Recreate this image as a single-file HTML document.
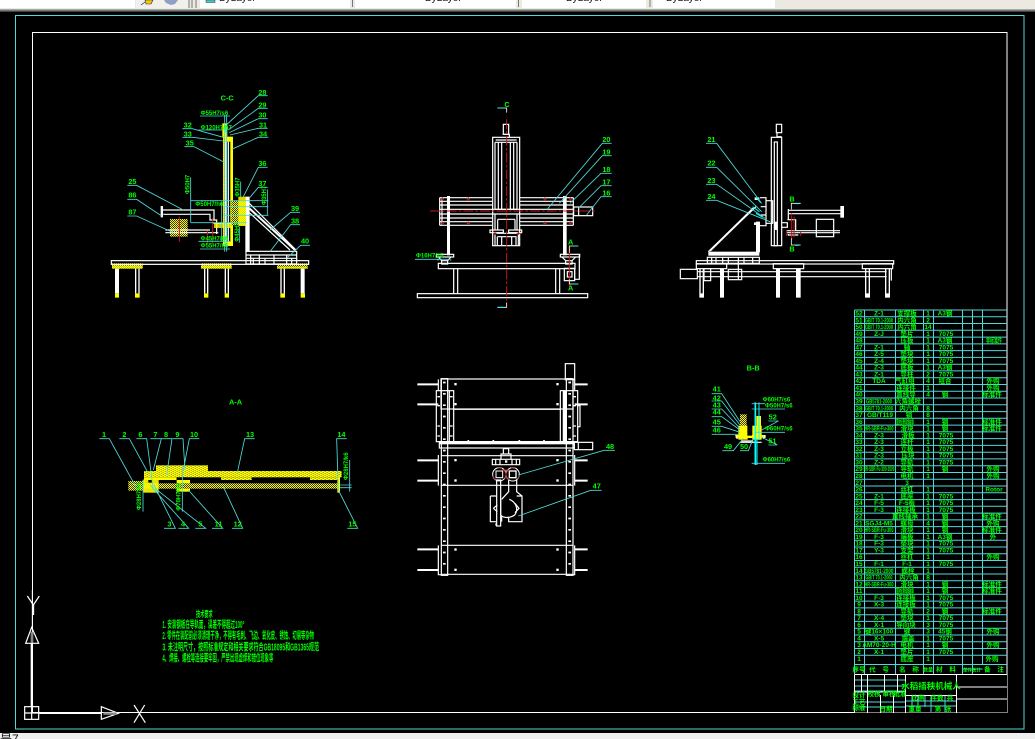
<!DOCTYPE html>
<html lang="zh"><head><meta charset="utf-8"><title>CAD</title>
<style>
html,body{margin:0;padding:0;background:#000;width:1035px;height:739px;overflow:hidden}
svg{display:block}
text{font-family:"Liberation Sans","Noto Sans CJK SC",sans-serif;fill:#0f0}
.w{fill:none;stroke:#fff;stroke-width:3.600}
.wt{fill:none;stroke:#fff;stroke-width:6}
.c{fill:none;stroke:#4fd8d8;stroke-width:2.600}
.cb{fill:none;stroke:#0ff;stroke-width:3}
.r{fill:none;stroke:#c01818;stroke-width:3}
.rd{fill:none;stroke:#c01818;stroke-width:3;stroke-dasharray:30 6 8 6}
.y{fill:#ff0}
.h{fill:url(#chk)}
.h2{fill:url(#chk2)}
.l text{font-size:22px;font-weight:bold}
.d text{font-size:18px;font-weight:bold}
.t text{font-size:6.500px;text-anchor:middle;font-weight:bold}
</style></head><body>
<svg width="1035" height="739" viewBox="0 0 1035 739" xmlns="http://www.w3.org/2000/svg">
<defs>
<pattern id="chk" width="6" height="6" patternUnits="userSpaceOnUse"><rect width="6" height="6" fill="#ff0"/><rect width="3" height="3" fill="#332"/><rect x="3" y="3" width="3" height="3" fill="#332"/></pattern>
<pattern id="chk2" width="12" height="6" patternUnits="userSpaceOnUse"><rect width="12" height="6" fill="#ff0"/><rect x="2" y="1" width="3" height="2" fill="#443"/><rect x="8" y="3" width="3" height="2" fill="#443"/></pattern>
</defs>
<rect width="1035" height="739" fill="#000"/>
<!-- top bar -->
<rect width="1035" height="9" fill="#ece9e0"/>
<rect x="0" y="0" width="135" height="8" fill="#fff"/>
<rect x="136" y="0" width="52" height="8" fill="#f2f0ea"/>
<path d="M141 5l4-3M145 0h8l-2 4h-5z" fill="#ec0" stroke="#225" stroke-width=".6"/>
<path d="M164 0h14l-3 4-4 1-5-2z" fill="#8fa0c8"/>
<rect x="200" y="0" width="150" height="8" fill="#fff"/>
<rect x="355" y="0" width="161" height="8" fill="#fff"/>
<rect x="522" y="0" width="124" height="8" fill="#fff"/>
<rect x="653" y="0" width="122" height="8" fill="#fff"/>
<path d="M189 0v8M192 0v8M196 0v8M352.500 0v7M518.500 0v7M650 0v7" stroke="#777" stroke-width="1"/>
<rect x="206" y="0" width="9" height="2.500" fill="#4cc" stroke="#333" stroke-width=".5"/>
<g style="font-size:10px"><text x="219" y="1" style="fill:#111;font-size:10px">ByLayer</text><text x="425" y="1" style="fill:#111;font-size:10px">ByLayer</text><text x="566" y="1" style="fill:#111;font-size:10px">ByLayer</text><text x="666" y="1" style="fill:#111;font-size:10px">ByLayer</text></g>
<rect y="9" width="1035" height="1.500" fill="#a8a8a8"/><rect y="10.500" width="1035" height="1.500" fill="#444"/>
<!-- frames -->
<rect x="15.500" y="15.500" width="1008.500" height="713.500" fill="none" stroke="#4fd8d8" stroke-width="1"/>
<rect x="32.500" y="32.500" width="974.500" height="680" fill="none" stroke="#fff" stroke-width="1"/>
<!-- bottom bar -->
<rect y="733" width="1035" height="6" fill="#efefef"/>
<text x="0" y="743" style="fill:#111;font-size:12px">是7</text>

<!-- VIEW 1 -->
<g transform="translate(90,80) scale(.33333)">
<rect x="66" y="550" width="92" height="16" class="h"/><rect x="333" y="550" width="92" height="16" class="h"/><rect x="561" y="550" width="92" height="16" class="h"/>
<path class="y" d="M66 556h92v10H66zM333 556h92v10h-92zM561 560h92v6h-92z" opacity=".75"/>
<rect x="64" y="542" width="592" height="11" class="w"/>
<path fill="#fff" d="M75 566h12v74H75zM135 566h4v74h-4zM145 566h4v74h-4zM342 566h4v74h-4zM351 566h4v74h-4zM404 566h4v74h-4zM413 566h4v74h-4zM571 566h4v74h-4zM581 566h4v74h-4zM632 566h12v74h-12z"/>
<path class="y" d="M75 640h12v13H75zM135 640h14v13h-14zM342 640h13v13h-13zM404 640h13v13h-13zM571 640h14v13h-14zM632 640h13v13h-13z"/>
<rect x="468" y="514" width="152" height="38" class="w"/><path class="w" d="M468 525h152M468 535h152M482 525v27M490 535v17M508 525v27M525 535v17M552 525v27M590 525v27M605 535v17"/>
<path fill="#fff" d="M466 350h13v165h-13z"/>
<path class="wt" d="M478 385 615 510"/><path class="w" d="M478 370 618 510M478 398 600 510"/>
<rect x="399" y="170" width="30" height="328" class="y"/>
<path fill="#000" d="M407 185h14v300h-14z"/><path class="w" d="M408 185v300M415 185v300"/>
<path d="M403 175v310" stroke="#d02010" stroke-width="3" stroke-dasharray="4 3"/>
<rect x="397" y="130" width="15" height="40" class="y"/>
<rect x="424" y="362" width="44" height="74" class="h"/><rect x="445" y="350" width="23" height="88" class="y" opacity=".85"/>
<path class="w" d="M214 390H372V420M220 403H360V420"/>
<rect x="212" y="378" width="7" height="34" fill="#fff"/>
<rect x="240" y="417" width="53" height="53" class="h"/>
<path class="w" d="M226 450H360M226 458H385M358 420H380V462M370 430H425"/>
<rect x="372" y="428" width="50" height="16" class="y" opacity=".8"/>
<path class="r" d="M268 410V485M352 452V490M368 415V490"/>
<path class="c" d="M404 105V515M410 105V515M302 292V428M302 362H535M302 428H470M400 380H535M400 406H535M532 328V406M330 108H420M325 150H400M325 484H420M330 507H420M452 305V350M448 440V488M395 365V485"/>
<path class="c" d="M533 47H505L412 132M533 85H505L415 150M533 116H505L418 158M533 145H505L420 165M535 172H505L425 208M277 146H307L400 172M277 172H307L400 183M283 200H312L405 248M533 262H505L460 350M533 322H505L480 352M630 397H602L540 450M630 434H602L540 515M660 496H632L590 535M112 316H140L280 390M112 358H140L215 408M112 408H140L250 458"/>
<path class="cb" d="M404 145l6 15" stroke-width="6"/>
<g class="l"><text x="505" y="45">28</text><text x="505" y="83">29</text><text x="505" y="113">30</text><text x="507" y="142">31</text><text x="507" y="169">34</text><text x="281" y="143">32</text><text x="281" y="169">33</text><text x="287" y="197">35</text><text x="505" y="258">36</text><text x="505" y="318">37</text><text x="603" y="393">39</text><text x="603" y="431">38</text><text x="633" y="491">40</text><text x="115" y="312">25</text><text x="115" y="353">86</text><text x="115" y="404">87</text><text x="392" y="62">C-C</text></g>
<g class="d"><text x="332" y="105">Φ55H7/s6</text><text x="332" y="148">Φ120H7/h7</text><text x="316" y="378">Φ50H7/h6</text><text x="332" y="481">Φ45H7/k6</text><text x="332" y="503">Φ55H7/k6</text>
<text transform="translate(298,342) rotate(-90)">Φ50H7</text><text transform="translate(448,350) rotate(-90)">Φ35H7</text><text transform="translate(528,375) rotate(-90)">Φ35H7</text><text transform="translate(447,485) rotate(-90)">Φ45H7</text></g>
</g>

<!-- VIEW 2 -->
<g transform="translate(400,90) scale(.33333)">
<path class="w" d="M119 323H277M119 334H277M119 345H277M119 358H520M119 372H520M119 384H277M119 395H277M119 406H277M359 323H520M359 334H520M359 345H520M359 384H520M359 395H520M359 406H520M119 323V406M126 323V406M492 323V406M520 323V406"/>
<rect x="278" y="142" width="81" height="325" class="w"/>
<path class="w" d="M285 157H351M285 157V358M351 157V358M295 157V358M305 157V358M331 157V358M341 157V358M287 150H350M285 372V420M351 372V420M293 388H345M293 388V420M345 388V420M285 358H351"/>
<rect x="310" y="103" width="16" height="30" class="w"/><path class="w" d="M308 133H328V142"/>
<rect x="270" y="420" width="40" height="8" class="w"/><rect x="326" y="420" width="39" height="8" class="w"/>
<path class="w" d="M285 430H355M285 430V465M355 430V465M292 440H348V465M292 440V465M305 440V465M335 440V465"/>
<rect x="141" y="318" width="9" height="178" fill="#fff"/><rect x="489" y="318" width="11" height="178" fill="#fff"/>
<rect x="109" y="493" width="52" height="8" class="w"/><rect x="481" y="493" width="58" height="8" class="w"/>
<path class="w" d="M115 501 125 512H143L153 501M125 512V522H143V512M486 501 497 512H516L527 501M497 512V522H516V512"/>
<rect x="115" y="520" width="410" height="16" class="w"/>
<path class="w" d="M161 536V610M173 536V610M467 536V610M479 536V610"/>
<rect x="52" y="611" width="511" height="12" class="w"/>
<rect x="493" y="535" width="31" height="37" class="w"/><rect x="502" y="545" width="14" height="16" class="w"/><path class="w" d="M524 535V568H538V493"/>
<rect x="521" y="351" width="57" height="26" class="w"/><path class="w" d="M536 351V377"/>
<path class="rd" d="M320 88V640M90 363H590"/>
<path class="r" d="M122 327h10M127 322v10M200 327h10M205 322v10M430 327h10M435 322v10M506 327h10M511 322v10M122 400h10M127 395v10M200 400h10M205 395v10M430 400h10M435 395v10M506 400h10M511 395v10M350 430h10M355 425v10M280 430h10M285 425v10"/>
<path class="r" d="M508 470V590"/>
<path class="c" d="M635 160H607L440 360M635 197H607L478 340M635 250H603L510 340M635 287H603L535 355M635 320H603L560 375M45 508H150"/>
<path fill="none" stroke="#fff" stroke-width="2.400" d="M292 54H320V68M292 652H320V638M508 488V468H535M508 568V582H535"/>
<path class="cb" d="M296 54h14M296 652h14M520 468h12M520 582h12M112 510h4M150 510h4" stroke-width="5"/>
<g class="l"><text x="607" y="156">20</text><text x="607" y="193">19</text><text x="607" y="246">18</text><text x="607" y="283">17</text><text x="607" y="316">16</text><text x="313" y="51">C</text><text x="504" y="464">A</text><text x="504" y="602">A</text></g>
<g class="d"><text x="48" y="503">Φ16H7/s6</text></g>
</g>

<!-- VIEW 3 -->
<g transform="translate(670,110) scale(.33333)">
<rect x="304" y="82" width="31" height="325" class="w"/><rect x="313" y="96" width="9" height="311" class="w"/>
<rect x="319" y="43" width="16" height="25" class="w"/><path class="w" d="M321 68V80H335"/>
<path class="w" d="M270 263H288V347H270M288 272H308V340H288M272 290H288M272 315H288"/>
<rect x="313" y="335" width="9" height="25" fill="#fff"/>
<path fill="#fff" d="M258 335h12v92h-12zM254 262h14v8h-14zM252 337h18v8h-18z"/>
<path class="wt" d="M120 422 250 295"/><path class="w" d="M115 425 258 290"/>
<rect x="115" y="425" width="153" height="12" fill="#fff"/>
<rect x="112" y="442" width="156" height="18" class="w"/><path class="w" d="M125 442V460M138 442V460M158 442V460M175 442V460M205 442V460M222 442V460M248 442V460"/>
<rect x="79" y="452" width="592" height="10" class="w"/>
<rect x="79" y="461" width="91" height="15" class="w"/><rect x="310" y="461" width="91" height="15" class="w"/><rect x="577" y="461" width="91" height="15" class="w"/>
<path class="w" d="M81 485H650M81 500H650M664 476V512"/>
<rect x="31" y="478" width="51" height="28" class="w"/><rect x="102" y="476" width="20" height="36" class="w"/><rect x="175" y="478" width="40" height="31" class="w"/><path class="w" d="M205 462V509"/>
<path fill="#fff" d="M88 476h4v87H88zM98 476h4v87H98zM88 550h14v13H88zM150 476h12v87h-12zM318 476h12v87h-12zM378 476h14v87h-14zM585 476h4v87h-4zM596 476h4v87h-4zM585 550h15v13h-15zM645 476h4v87h-4zM656 476h4v87h-4zM645 550h15v13h-15z"/>
<path class="w" d="M357 301H512M357 311H512M355 297V330"/>
<rect x="511" y="288" width="11" height="35" fill="#fff"/>
<rect x="439" y="328" width="52" height="52" class="w"/>
<path class="w" d="M350 362H510M350 368H510M352 329H377V362M335 338H352V352H335M355 372V375H385"/>
<path class="r" d="M365 310V390M372 320V382M350 362V378M392 366V378"/>
<path fill="none" stroke="#fff" stroke-width="2.400" d="M364 298V280H392M364 385V405H392"/>
<path class="cb" d="M376 281h10M376 406h10" stroke-width="5"/>
<path class="c" d="M108 100H140L275 280M108 172H140L275 305M108 223H140L285 325M108 271H140L300 335"/>
<path class="cb" d="M258 262l14 16M248 290l20 15M258 310l20 12" stroke-width="4"/>
<g class="l"><text x="112" y="96">21</text><text x="112" y="167">22</text><text x="112" y="219">23</text><text x="112" y="267">24</text><text x="358" y="275">B</text><text x="358" y="425">B</text></g>
</g>

<!-- VIEW 4 -->
<g transform="translate(90,390) scale(.33333)">
<rect x="198" y="226" width="156" height="17" class="h2"/>
<rect x="162" y="243" width="593" height="19" class="h2"/>
<rect x="162" y="262" width="98" height="8" class="y"/><rect x="393" y="262" width="92" height="8" class="h2"/><rect x="660" y="262" width="85" height="8" class="h2"/>
<rect x="115" y="273" width="50" height="29" class="h"/>
<rect x="160" y="280" width="590" height="16" class="h"/>
<rect x="160" y="268" width="46" height="40" class="y" opacity=".9"/>
<rect x="260" y="270" width="40" height="10" class="y"/><rect x="260" y="296" width="40" height="9" class="y"/>
<path fill="#000" d="M175 270h12v8h-12zM260 262h33v8h-33z"/>
<rect x="742" y="260" width="8" height="48" class="y"/>
<path class="c" d="M28 146H58L140 295M88 146H118L175 250M139 146H170L190 300M181 146H214L190 240M214 146H246L230 255M248 146H279L285 240M328 146H298L280 240M494 146H464L442 248M770 146H740L745 300M222 415H256L192 285M265 415H296L180 285M316 415H347L195 295M366 415H398L295 300M426 415H458L400 290M772 415H803L745 300"/>
<path class="c" d="M159 270V365M277 232V365M750 285H785M750 293H785M779 210V305"/>
<g class="l"><text x="36" y="141">1</text><text x="97" y="141">2</text><text x="145" y="141">6</text><text x="190" y="141">7</text><text x="222" y="141">8</text><text x="256" y="141">9</text><text x="300" y="141">10</text><text x="468" y="141">13</text><text x="742" y="141">14</text><text x="232" y="410">3</text><text x="273" y="410">4</text><text x="325" y="410">5</text><text x="374" y="410">11</text><text x="431" y="410">12</text><text x="775" y="410">15</text><text x="417" y="43">A-A</text></g>
<g class="d"><text transform="translate(153,360) rotate(-90)">Φ28H7/k6</text><text transform="translate(271,362) rotate(-90)">Φ70H7/k6</text><text transform="translate(774,270) rotate(-90)">Φ28H7/k6</text></g>
</g>

<!-- VIEW 5 -->
<g transform="translate(400,360) scale(.33333)">
<path class="wt" d="M52 73H115M524 73H563M52 133H115M524 133H563M52 301H115M524 301H563M52 362H115M524 362H563M52 568H115M524 568H563M52 630H115M524 630H563"/>
<rect x="123" y="57" width="396" height="90" class="w"/><path class="w" d="M160 148H480"/>
<rect x="496" y="11" width="28" height="48" class="w"/>
<rect x="124" y="56" width="19" height="590" class="w"/><rect x="499" y="56" width="20" height="590" class="w"/>
<path class="w" d="M115 58V90M115 285V377M115 556V644H125M524 58V90M524 285V377M524 556V644H515"/>
<rect x="109" y="92" width="52" height="153" class="w"/><rect x="481" y="92" width="52" height="153" class="w"/>
<path class="w" d="M148 92V245M490 92V245M533 137H540V200H533"/>
<path fill="#fff" d="M489 92h12v153h-12z"/>
<rect x="118" y="245" width="405" height="19" class="w"/><rect x="118" y="243" width="405" height="10" fill="#fff"/>
<rect x="523" y="247" width="55" height="22" class="w"/><path class="w" d="M535 247V269"/>
<path class="w" d="M124 287H519M124 376H519M124 556H519M124 643H519"/>
<g fill="#fff"><rect x="163" y="69" width="7" height="7"/><rect x="469" y="69" width="7" height="7"/><rect x="163" y="129" width="7" height="7"/><rect x="469" y="129" width="7" height="7"/><rect x="163" y="297" width="7" height="7"/><rect x="469" y="297" width="7" height="7"/><rect x="163" y="358" width="7" height="7"/><rect x="469" y="358" width="7" height="7"/><rect x="163" y="565" width="7" height="7"/><rect x="469" y="565" width="7" height="7"/><rect x="163" y="626" width="7" height="7"/><rect x="469" y="626" width="7" height="7"/></g>
<path d="M133 65V640M509 65V640" stroke="#fff" stroke-width="8" stroke-dasharray="5 29" fill="none"/>
<path d="M112 110h8M112 137h8M112 198h8M112 228h8M150 110h8M150 198h8M150 228h8M520 110h8M520 137h8M520 198h8M520 228h8" stroke="#fff" stroke-width="4"/>
<path d="M205 240v4M280 240v4M358 240v4M432 240v4" stroke="#fff" stroke-width="5"/>
<path class="w" d="M310 266H326V282H310zM303 282H333V298H303zM277 298H359V314H277zM287 298V314M300 298V314M336 298V314M349 298V314"/>
<rect x="315" y="301" width="7" height="7" fill="#fff"/>
<circle cx="298" cy="343" r="20" fill="none" stroke="#fff" stroke-width="3"/><circle cx="338" cy="343" r="20" fill="none" stroke="#fff" stroke-width="3"/>
<circle cx="298" cy="343" r="20" fill="none" stroke="#c01818" stroke-width="2" stroke-dasharray="14 30"/><circle cx="338" cy="343" r="20" fill="none" stroke="#c01818" stroke-width="2" stroke-dasharray="14 30"/>
<rect x="328" y="333" width="20" height="20" fill="none" stroke="#fff" stroke-width="4"/><rect x="288" y="333" width="20" height="20" fill="none" stroke="#fff" stroke-width="3"/>
<path class="r" d="M306 330H330M318 330V350"/>
<rect x="290" y="360" width="12" height="138" class="w"/>
<path class="w" d="M271 408H290M271 408V485H290M326 360V395L305 418M350 360V395L366 408V485H326V470M366 408H350M305 470V485M328 418C345 425 358 445 344 465 330 475 310 475 302 465M302 418V465M280 445 292 435M280 445 292 455M345 430 357 445 345 458"/>
<rect x="286" y="490" width="5" height="7" fill="#fff"/>
<path class="c" d="M645 271H612L355 345M605 391H572L355 468"/>
<g class="l"><text x="618" y="267">48</text><text x="578" y="386">47</text></g>
</g>

<!-- SECTION B-B -->
<g transform="translate(690,355) scale(.33333)">
<rect x="150" y="178" width="20" height="38" class="h"/>
<rect x="145" y="212" width="28" height="42" class="y"/>
<rect x="187" y="212" width="28" height="42" class="y"/>
<rect x="199" y="183" width="14" height="30" class="y"/>
<rect x="137" y="240" width="90" height="9" class="y"/>
<path fill="#000" d="M172 212h14v30h-14z"/>
<path class="w" d="M154 258H190M150 262H215M225 240 220 252M137 240 142 252"/>
<path d="M196 142V330" stroke="#0ff" stroke-width="5"/><path d="M207 142V255M201 250V330" stroke="#0ff" stroke-width="3"/>
<path class="c" d="M65 116H95L150 200M65 138H95L150 210M65 162H95L150 220M65 185H95L150 225M65 214H95L150 232M65 238H145M97 287H130L160 250M150 287H175L190 250M185 146H225M185 162H285M185 325H285M195 232H285M235 198H265L215 225M235 270H262L212 245"/>
<g class="l"><text x="170" y="47">B-B</text><text x="68" y="110">41</text><text x="68" y="137">42</text><text x="68" y="158">43</text><text x="68" y="178">44</text><text x="68" y="208">45</text><text x="68" y="232">46</text><text x="102" y="282">49</text><text x="150" y="282">50</text><text x="236" y="193">52</text><text x="235" y="266">51</text></g>
<g class="d"><text x="218" y="140">Φ60H7/s6</text><text x="225" y="158">Φ50H7/s6</text><text x="225" y="227">Φ60H7/s6</text><text x="218" y="320">Φ60H7/s6</text></g>
</g>

<!-- NOTES -->
<g transform="translate(0,590) scale(.33333)" style="font-weight:bold">
<text x="588" y="81" style="font-size:26px" textLength="50" lengthAdjust="spacingAndGlyphs">技术要求</text>
<text x="487" y="114" style="font-size:31px" textLength="246" lengthAdjust="spacingAndGlyphs">1. 安装钢板在导轨面，误差不得超过100°</text>
<text x="487" y="147" style="font-size:31px" textLength="455" lengthAdjust="spacingAndGlyphs">2. 零件在装配前必须清理干净，不得有毛刺、飞边、氧化皮、锈蚀、切屑等杂物</text>
<text x="487" y="181" style="font-size:31px" textLength="470" lengthAdjust="spacingAndGlyphs">3. 未注明尺寸，按照标准规定和相关要求符合GB18095和GB1365规范</text>
<text x="487" y="214" style="font-size:31px" textLength="333" lengthAdjust="spacingAndGlyphs">4、焊接、螺栓等连接要牢固，严禁出现虚焊和错位现象等</text>
</g>

<!-- UCS -->
<g transform="translate(0,590) scale(.33333)">
<path d="M97 0V108" stroke="#fff" stroke-width="3" fill="none"/>
<path class="w" d="M82 18 100 45 118 18M100 45V75"/><path d="M100 45V75" stroke="#fff" stroke-width="5"/>
<path class="w" d="M95 112 77 160H116Z"/><path d="M96 125V158" stroke="#888" stroke-width="8"/>
<path d="M95 160V350" stroke="#fff" stroke-width="6"/>
<rect x="74" y="350" width="42" height="38" class="w"/><path class="w" d="M95 350V388M74 369H116"/>
<path d="M116 369H305" stroke="#fff" stroke-width="6"/>
<path class="w" d="M304 350 355 370 304 388Z"/><path d="M310 371H350" stroke="#888" stroke-width="7"/>
<path class="w" d="M402 345 436 398M434 345 402 398"/>
</g>

<!-- TABLE lines -->
<path fill="none" stroke="#4fd8d8" stroke-width="1" d="M854.500 310H1007M854.500 316.800H1007M854.500 323.500H1007M854.500 330.300H1007M854.500 337.100H1007M854.500 343.900H1007M854.500 350.600H1007M854.500 357.400H1007M854.500 364.200H1007M854.500 370.900H1007M854.500 377.700H1007M854.500 384.500H1007M854.500 391.200H1007M854.500 398H1007M854.500 404.800H1007M854.500 411.600H1007M854.500 418.300H1007M854.500 425.100H1007M854.500 431.900H1007M854.500 438.600H1007M854.500 445.400H1007M854.500 452.200H1007M854.500 458.900H1007M854.500 465.700H1007M854.500 472.500H1007M854.500 479.300H1007M854.500 486H1007M854.500 492.800H1007M854.500 499.600H1007M854.500 506.300H1007M854.500 513.100H1007M854.500 519.900H1007M854.500 526.600H1007M854.500 533.400H1007M854.500 540.200H1007M854.500 547H1007M854.500 553.700H1007M854.500 560.500H1007M854.500 567.300H1007M854.500 574H1007M854.500 580.800H1007M854.500 587.600H1007M854.500 594.300H1007M854.500 601.100H1007M854.500 607.900H1007M854.500 614.700H1007M854.500 621.400H1007M854.500 628.200H1007M854.500 635H1007M854.500 641.700H1007M854.500 648.500H1007M854.500 655.300H1007M854.500 664.500H1007M854.500 310V674M864.500 310V674M895.500 310V674M923.500 310V674M933.500 310V674M962.500 310V674M972.500 310V674M982.500 310V664.500M962.500 669H982.500"/>
<g class="t">
<g transform="translate(0,315.500)"><text x="859">52</text><text x="879">Z-1</text><text x="907">支撑板</text><text x="928">1</text><text x="945">A3钢</text></g>
<g transform="translate(0,322.300)"><text x="859">51</text><text x="879" textLength="28" lengthAdjust="spacingAndGlyphs">GB/T 70.1-2000</text><text x="907">内六角</text><text x="928">2</text></g>
<g transform="translate(0,329)"><text x="859">50</text><text x="879" textLength="28" lengthAdjust="spacingAndGlyphs">GB/T 70.1-2000</text><text x="907">内六角</text><text x="928">14</text></g>
<g transform="translate(0,335.800)"><text x="859">49</text><text x="879">Z-J</text><text x="907">垫片</text><text x="928">1</text><text x="946">7075</text></g>
<g transform="translate(0,342.600)"><text x="859">48</text><text x="907">压板</text><text x="928">1</text><text x="945">A3钢</text><text x="994" textLength="16" lengthAdjust="spacingAndGlyphs">非标准件</text></g>
<g transform="translate(0,349.400)"><text x="859">47</text><text x="879">Z-1</text><text x="907">轴</text><text x="928">1</text><text x="946">7075</text></g>
<g transform="translate(0,356.100)"><text x="859">46</text><text x="879">Z-5</text><text x="907">垫块</text><text x="928">1</text><text x="946">7075</text></g>
<g transform="translate(0,362.900)"><text x="859">45</text><text x="879">Z-4</text><text x="907">垫块</text><text x="928">1</text><text x="946">7075</text></g>
<g transform="translate(0,369.700)"><text x="859">44</text><text x="879">Z-3</text><text x="907">底板</text><text x="928">1</text><text x="945">A3钢</text></g>
<g transform="translate(0,376.400)"><text x="859">43</text><text x="879">Z-1</text><text x="907">导柱</text><text x="928">2</text><text x="946">7075</text></g>
<g transform="translate(0,383.200)"><text x="859">42</text><text x="879">TDA</text><text x="905">气缸组</text><text x="928">4</text><text x="945">组合</text><text x="993">外购</text></g>
<g transform="translate(0,390)"><text x="859">41</text><text x="906">连接件</text><text x="928">1</text><text x="993">外购</text></g>
<g transform="translate(0,396.700)"><text x="859">40</text><text x="906">直线导</text><text x="928">4</text><text x="945">钢</text><text x="992">标准件</text></g>
<g transform="translate(0,403.500)"><text x="859">39</text><text x="879" textLength="26" lengthAdjust="spacingAndGlyphs">GB5781-2000</text><text x="908">六角螺栓</text></g>
<g transform="translate(0,410.300)"><text x="859">38</text><text x="879" textLength="28" lengthAdjust="spacingAndGlyphs">GB/T 70.1-2000</text><text x="909">内六角</text><text x="928">8</text></g>
<g transform="translate(0,417)"><text x="859">37</text><text x="880">GB/T119</text><text x="909">销</text><text x="928">8</text></g>
<g transform="translate(0,423.800)"><text x="859">36</text><text x="905" textLength="18" lengthAdjust="spacingAndGlyphs">直线滑动轴承</text><text x="928">1</text><text x="945">钢</text><text x="992">标准件</text></g>
<g transform="translate(0,430.600)"><text x="859">35</text><text x="879" textLength="29" lengthAdjust="spacingAndGlyphs">HR-SBR-Fu-300</text><text x="907">滑块</text><text x="928">1</text><text x="945">钢</text><text x="992">标准件</text></g>
<g transform="translate(0,437.400)"><text x="859">34</text><text x="879">Z-3</text><text x="908">滑板</text><text x="928">1</text><text x="946">7075</text></g>
<g transform="translate(0,444.100)"><text x="859">33</text><text x="879">Z-3</text><text x="907">连杆</text><text x="928">1</text><text x="946">7075</text></g>
<g transform="translate(0,450.900)"><text x="859">32</text><text x="879">Z-3</text><text x="907">立板</text><text x="928">1</text><text x="946">7075</text></g>
<g transform="translate(0,457.700)"><text x="859">31</text><text x="879">Z-3</text><text x="908">压块</text><text x="928">1</text><text x="946">7075</text></g>
<g transform="translate(0,464.400)"><text x="859">30</text><text x="879">Z-2</text><text x="907">导轨</text><text x="928">1</text><text x="946">7075</text></g>
<g transform="translate(0,471.200)"><text x="859">29</text><text x="879" textLength="31" lengthAdjust="spacingAndGlyphs">HR-SBR-Fu-300-2000</text><text x="907">导轨</text><text x="928">1</text><text x="945">钢</text><text x="993">外购</text></g>
<g transform="translate(0,478)"><text x="859">28</text><text x="907">电机</text><text x="928">1</text><text x="993">外购</text></g>
<g transform="translate(0,484.800)"><text x="859">27</text><text x="907">3</text></g>
<g transform="translate(0,491.500)"><text x="859">26</text><text x="907">丝杠</text><text x="928">1</text><text x="994">Rotor</text></g>
<g transform="translate(0,498.300)"><text x="859">25</text><text x="879">Z-1</text><text x="907">底座</text><text x="928">1</text><text x="946">7075</text></g>
<g transform="translate(0,505.100)"><text x="859">24</text><text x="879">F-5</text><text x="907">F-5板</text><text x="928">1</text><text x="946">7075</text></g>
<g transform="translate(0,511.800)"><text x="859">23</text><text x="879">F-3</text><text x="906">连接板</text><text x="928">1</text><text x="946">7075</text></g>
<g transform="translate(0,518.600)"><text x="859">22</text><text x="905">直线轴承</text><text x="928">1</text><text x="945">钢</text><text x="992">标准件</text></g>
<g transform="translate(0,525.400)"><text x="859">21</text><text x="879">SGJ4-M5</text><text x="907">螺母</text><text x="928">4</text><text x="945">钢</text><text x="993">外购</text></g>
<g transform="translate(0,532.100)"><text x="859">20</text><text x="879" textLength="29" lengthAdjust="spacingAndGlyphs">HR-SBR-Fu-300</text><text x="907">滑块</text><text x="928">1</text><text x="945">钢</text><text x="992">标准件</text></g>
<g transform="translate(0,538.900)"><text x="859">19</text><text x="879">F-3</text><text x="907">端板</text><text x="928">1</text><text x="945">A3钢</text><text x="993">外</text></g>
<g transform="translate(0,545.700)"><text x="859">18</text><text x="879">F-3</text><text x="907">垫块</text><text x="928">1</text><text x="946">7075</text></g>
<g transform="translate(0,552.500)"><text x="859">17</text><text x="879">Y-3</text><text x="907">支架</text><text x="928">1</text><text x="946">7075</text></g>
<g transform="translate(0,559.200)"><text x="859">16</text><text x="907">丝杠</text><text x="928">1</text><text x="993">外购</text></g>
<g transform="translate(0,566)"><text x="859">15</text><text x="879">F-1</text><text x="907">F-1</text><text x="928">1</text><text x="946">7075</text></g>
<g transform="translate(0,572.800)"><text x="859">14</text><text x="879" textLength="29" lengthAdjust="spacingAndGlyphs">GB5781-2000</text><text x="908">螺栓</text><text x="928">1</text></g>
<g transform="translate(0,579.500)"><text x="859">13</text><text x="879" textLength="27" lengthAdjust="spacingAndGlyphs">GB/T 70.1-2000</text><text x="909">内六角</text><text x="928">8</text></g>
<g transform="translate(0,586.300)"><text x="859">12</text><text x="879" textLength="29" lengthAdjust="spacingAndGlyphs">HR-SBR-Fu-300</text><text x="907">滑块</text><text x="928">1</text><text x="945">钢</text><text x="992">标准件</text></g>
<g transform="translate(0,593.100)"><text x="859">11</text><text x="905" textLength="18" lengthAdjust="spacingAndGlyphs">直线滑动轴承</text><text x="928">1</text><text x="945">钢</text><text x="992">标准件</text></g>
<g transform="translate(0,599.800)"><text x="859">10</text><text x="879">F-3</text><text x="906">连接板</text><text x="928">1</text><text x="946">7075</text></g>
<g transform="translate(0,606.600)"><text x="859">9</text><text x="879">X-3</text><text x="906">连接板</text><text x="928">1</text><text x="946">7075</text></g>
<g transform="translate(0,613.400)"><text x="859">8</text><text x="907">导轨</text><text x="928">2</text><text x="945">钢</text><text x="992">标准件</text></g>
<g transform="translate(0,620.200)"><text x="859">7</text><text x="879">X-4</text><text x="907">垫块</text><text x="928">1</text><text x="946">7075</text></g>
<g transform="translate(0,626.900)"><text x="859">6</text><text x="879">X-1</text><text x="906">导向块</text><text x="928">3</text><text x="946">7075</text></g>
<g transform="translate(0,633.700)"><text x="859">5</text><text x="879">键16×100</text><text x="907">键</text><text x="928">3</text><text x="945">45钢</text><text x="993">外购</text></g>
<g transform="translate(0,640.500)"><text x="859">4</text><text x="879">X-5</text><text x="908">端盖</text><text x="928">1</text><text x="946">7075</text></g>
<g transform="translate(0,647.200)"><text x="859">3</text><text x="879">AM70-20-H</text><text x="907">电机</text><text x="928">1</text><text x="945">钢</text><text x="993">外购</text></g>
<g transform="translate(0,654)"><text x="859">2</text><text x="879">X-1</text><text x="907">垫片</text><text x="928">1</text><text x="946">7075</text></g>
<g transform="translate(0,660.800)"><text x="859">1</text><text x="907">底座</text><text x="928">1</text><text x="992">外购</text></g>
<g transform="translate(0,671.500)"><text x="859">序号</text><text x="879" style="word-spacing:5px">代 号</text><text x="909" style="word-spacing:5px">名 称</text><text x="928" style="font-size:5px">数量</text><text x="946" style="word-spacing:5px">材 料</text><text x="972" style="font-size:4.500px">单件总计</text><text x="994" style="word-spacing:5px">备 注</text></g>
</g>
<!-- Title block -->
<rect x="854.500" y="674.500" width="152.500" height="38" fill="#000"/>
<path fill="none" stroke="#4fd8d8" stroke-width="1" d="M855 680H905M855 686H905M855 691H905M855 702H905M855 707H905M906 701H956M906 706H956M912 695V712M918 695V707M925 695V707M931 695V712M945 695V712"/>
<path fill="none" stroke="#fff" stroke-width="1" d="M854.500 674.500H1007M854.500 674.500V712.500M905.500 674.500V712.500M956.500 674.500V712.500M956.500 687H1007M956.500 699H1007M905.500 695.500H956.500M854.500 692H905.500M861.500 674.500V692M867.500 674.500V692M884.500 674.500V692M897.500 674.500V692M867.500 692V712.500M880.500 695V712.500M893.500 695V712.500"/>
<text x="931" y="689" style="font-size:8.500px;font-weight:bold;text-anchor:middle">水稻插秧机械人</text>
<g class="t">
<text x="859" y="697">设计</text><text x="874" y="696">校核</text><text x="889" y="696">审核</text><text x="900" y="696">批准</text>
<text x="859" y="704">工艺</text><text x="859" y="710">标准</text><text x="886" y="711">日期</text>
<text x="918" y="700">比例</text><text x="937" y="700">件数</text><text x="950" y="700">共</text>
<text x="915" y="711">重量</text><text x="938" y="711">第</text><text x="948" y="711">张</text>
</g>
</svg>
</body></html>
